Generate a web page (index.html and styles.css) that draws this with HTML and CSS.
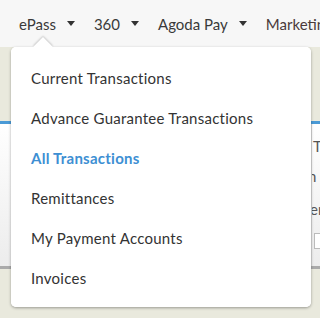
FILE: index.html
```html
<!DOCTYPE html>
<html>
<head>
<meta charset="utf-8">
<link rel="stylesheet" href="styles.css">
</head>
<body>
<nav class="topnav">
  <div class="nav-item">ePass <span class="caret"></span></div>
  <div class="nav-item">360 <span class="caret"></span></div>
  <div class="nav-item">Agoda Pay <span class="caret"></span></div>
  <div class="nav-item last">Marketing</div>
</nav>
<main class="page">
  <section class="card">
    <div class="card-right">
      <div class="frag f1">To</div>
      <div class="frag f2">n D</div>
      <div class="frag f3">er</div>
      <div class="input"></div>
    </div>
  </section>
</main>
<div class="dropdown">
  <div class="pointer"></div>
  <ul class="menu">
    <li>Current Transactions</li>
    <li>Advance Guarantee Transactions</li>
    <li class="active">All Transactions</li>
    <li>Remittances</li>
    <li>My Payment Accounts</li>
    <li>Invoices</li>
  </ul>
</div>
</body>
</html>
```
FILE: styles.css
```css
* { box-sizing: border-box; }
html, body { margin: 0; padding: 0; }
body {
  width: 320px;
  height: 318px;
  overflow: hidden;
  background: #e9e9dd;
  font-family: Lato, "Noto Sans", sans-serif;
  color: #333;
  position: relative;
}
.topnav {
  height: 47px;
  background: #f7f7f7;
  display: flex;
  align-items: center;
  padding-left: 19px;
  gap: 19px;
  white-space: nowrap;
  font-size: 15px;
  color: #3a3a3a;
  overflow: hidden;
}
.nav-item { display: flex; align-items: center; gap: 11px; }
.nav-item.last { color: #4a3a3a; }
.caret {
  width: 0; height: 0;
  border-left: 4.5px solid transparent;
  border-right: 4.5px solid transparent;
  border-top: 5px solid #333;
}
.page { padding-top: 74px; }
.card {
  height: 148px;
  border-top: 3px solid #4a9ad6;
  border-bottom: 3px solid #aaa;
  background: linear-gradient(#ffffff, #ececec);
  position: relative;
}
.card-right {
  position: absolute;
  left: 311px;
  top: 0;
  width: 9px;
  height: 100%;
  overflow: hidden;
  border-left: 1px solid #d8d8d8;
  font-size: 15px;
  color: #555;
}
.frag { position: absolute; left: 0; white-space: nowrap; }
.f1 { top: 13px; left: 1px; }
.f2 { top: 43px; left: -4px; }
.f3 { top: 76px; left: -2px; }
.input {
  position: absolute;
  left: 2px; top: 109px;
  width: 20px; height: 16px;
  border: 1px solid #bbb;
  background: #fff;
}
.dropdown {
  position: absolute;
  left: 11px;
  top: 47px;
  width: 300px;
  height: 260px;
  background: #fff;
  border-radius: 5px;
  box-shadow: 0 1px 3px rgba(0,0,0,0.35);
}
.pointer {
  position: absolute;
  left: 25px;
  top: -7px;
  width: 14px;
  height: 14px;
  background: #fff;
  transform: rotate(45deg);
  box-shadow: -1px -1px 2px rgba(0,0,0,0.18);
}
.menu {
  position: relative;
  list-style: none;
  margin: 0;
  padding: 11px 0 9px;
  background: #fff;
  border-radius: 5px;
}
.menu li {
  height: 40px;
  line-height: 40px;
  padding-left: 20px;
  font-size: 15px;
  letter-spacing: 0.25px;
  color: #333;
  white-space: nowrap;
}
.menu li.active { color: #3d8fd3; font-weight: bold; }
```
